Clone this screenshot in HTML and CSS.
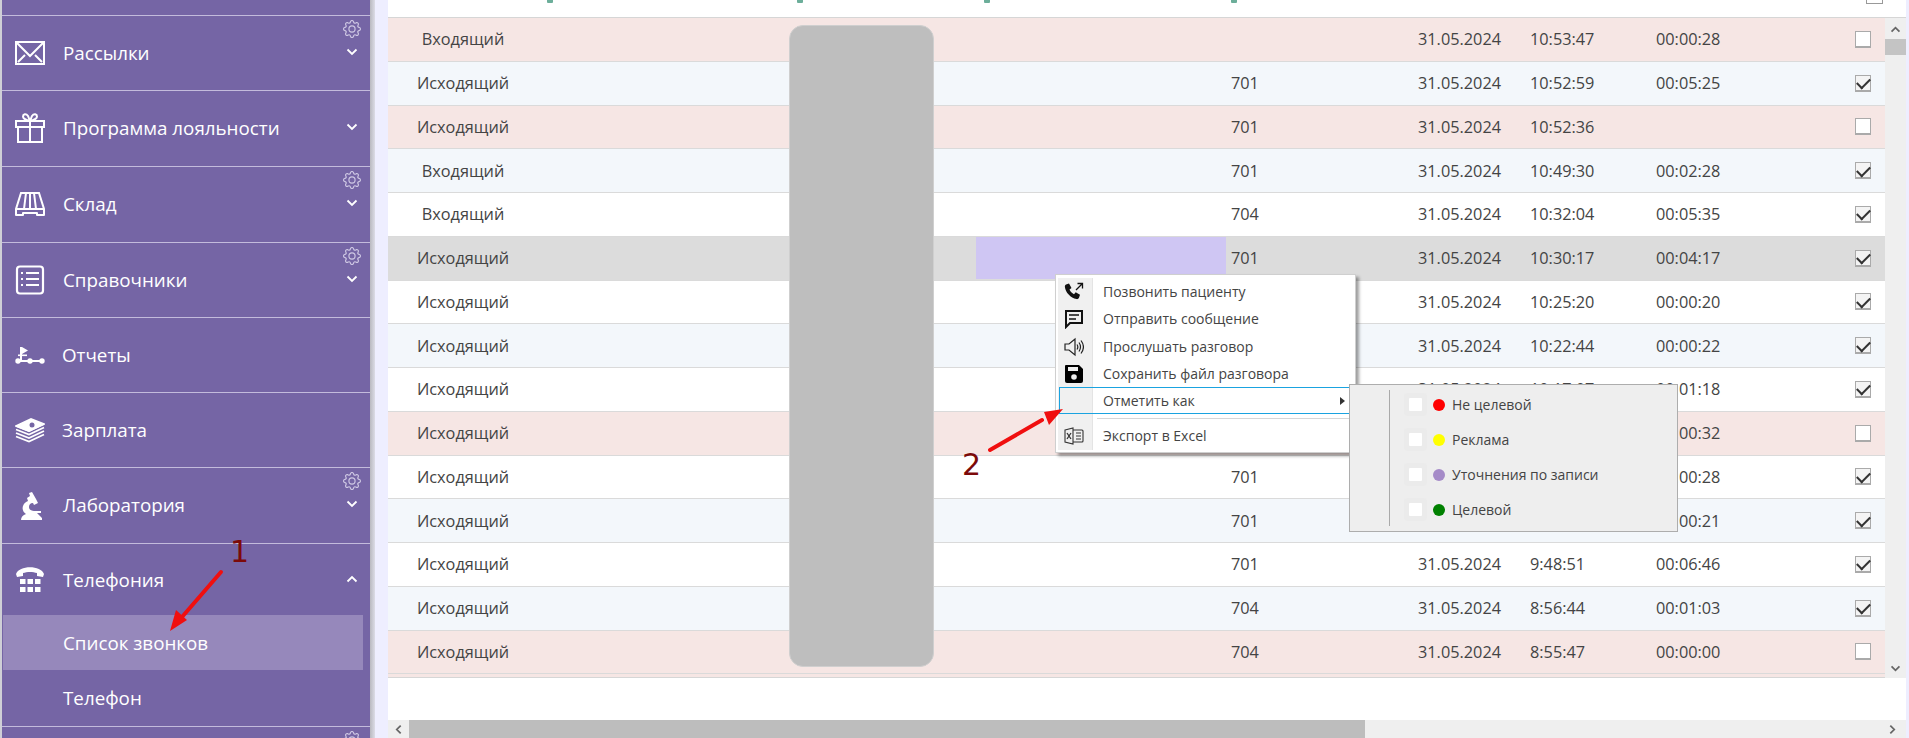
FILE: index.html
```html
<!DOCTYPE html>
<html lang="ru">
<head>
<meta charset="utf-8">
<title>Список звонков</title>
<link rel="stylesheet" href="styles.css">
</head>
<body>
<div class="page">
  <nav class="sidebar">
    <div class="nav-stub"></div>
    <div class="nav-item h75">
      <svg class="nav-icon" viewBox="0 0 30 30"><g fill="none" stroke="#fff" stroke-width="2"><rect x="1" y="4" width="28" height="22"/><path d="M2 5l13 13L28 5M3 24l7-7M27 24l-7-7"/></g></svg>
      <span class="nav-text">Рассылки</span>
      <svg class="gear" viewBox="0 0 16 16"><path d="M8 4.754a3.246 3.246 0 1 0 0 6.492 3.246 3.246 0 0 0 0-6.492zM5.754 8a2.246 2.246 0 1 1 4.492 0 2.246 2.246 0 0 1-4.492 0z"/><path d="M9.796 1.343c-.527-1.79-3.065-1.79-3.592 0l-.094.319a.873.873 0 0 1-1.255.52l-.292-.16c-1.64-.892-3.433.902-2.54 2.541l.159.292a.873.873 0 0 1-.52 1.255l-.319.094c-1.79.527-1.79 3.065 0 3.592l.319.094a.873.873 0 0 1 .52 1.255l-.16.292c-.892 1.64.901 3.434 2.541 2.54l.292-.159a.873.873 0 0 1 1.255.52l.094.319c.527 1.79 3.065 1.79 3.592 0l.094-.319a.873.873 0 0 1 1.255-.52l.292.16c1.64.893 3.434-.902 2.54-2.541l-.159-.292a.873.873 0 0 1 .52-1.255l.319-.094c1.79-.527 1.79-3.065 0-3.592l-.319-.094a.873.873 0 0 1-.52-1.255l.16-.292c.893-1.64-.902-3.433-2.541-2.54l-.292.159a.873.873 0 0 1-1.255-.52l-.094-.319zm-2.633.283c.246-.835 1.428-.835 1.674 0l.094.319a1.873 1.873 0 0 0 2.693 1.115l.291-.16c.764-.415 1.6.42 1.184 1.185l-.159.292a1.873 1.873 0 0 0 1.116 2.692l.318.094c.835.246.835 1.428 0 1.674l-.319.094a1.873 1.873 0 0 0-1.115 2.693l.16.291c.415.764-.42 1.6-1.185 1.184l-.291-.159a1.873 1.873 0 0 0-2.693 1.116l-.094.318c-.246.835-1.428.835-1.674 0l-.094-.319a1.873 1.873 0 0 0-2.692-1.115l-.292.16c-.764.415-1.6-.42-1.184-1.185l.159-.291A1.873 1.873 0 0 0 1.945 8.93l-.319-.094c-.835-.246-.835-1.428 0-1.674l.319-.094A1.873 1.873 0 0 0 3.06 4.377l-.16-.292c-.415-.764.42-1.6 1.185-1.184l.292.159a1.873 1.873 0 0 0 2.692-1.115l.094-.319z"/></svg>
      <svg class="chev" viewBox="0 0 12 8"><path d="M1.500 1.500L6 6l4.500-4.500"/></svg>
    </div>
    <div class="nav-item h76">
      <svg class="nav-icon" viewBox="0 0 30 30"><g fill="none" stroke="#fff" stroke-width="2"><rect x="1" y="8" width="28" height="6"/><rect x="3" y="14" width="24" height="15"/><path d="M15 8v21M15 8C11 7 8 6 8 3.500S11 0 13 3l2 5 2-5c2-3 5-2 5 .5S19 7 15 8"/></g></svg>
      <span class="nav-text">Программа лояльности</span>
      <svg class="chev" viewBox="0 0 12 8"><path d="M1.500 1.500L6 6l4.500-4.500"/></svg>
    </div>
    <div class="nav-item h76">
      <svg class="nav-icon" viewBox="0 0 30 30"><g fill="none" stroke="#fff" stroke-width="2"><path d="M6 4h18l5 16H1zM11 4l-2 16M15 4v16M19 4l2 16"/><path d="M1 20v6h7v-2h14v2h7v-6" stroke-linejoin="round"/></g></svg>
      <span class="nav-text">Склад</span>
      <svg class="gear" viewBox="0 0 16 16"><path d="M8 4.754a3.246 3.246 0 1 0 0 6.492 3.246 3.246 0 0 0 0-6.492zM5.754 8a2.246 2.246 0 1 1 4.492 0 2.246 2.246 0 0 1-4.492 0z"/><path d="M9.796 1.343c-.527-1.79-3.065-1.79-3.592 0l-.094.319a.873.873 0 0 1-1.255.52l-.292-.16c-1.64-.892-3.433.902-2.54 2.541l.159.292a.873.873 0 0 1-.52 1.255l-.319.094c-1.79.527-1.79 3.065 0 3.592l.319.094a.873.873 0 0 1 .52 1.255l-.16.292c-.892 1.64.901 3.434 2.541 2.54l.292-.159a.873.873 0 0 1 1.255.52l.094.319c.527 1.79 3.065 1.79 3.592 0l.094-.319a.873.873 0 0 1 1.255-.52l.292.16c1.64.893 3.434-.902 2.54-2.541l-.159-.292a.873.873 0 0 1 .52-1.255l.319-.094c1.79-.527 1.79-3.065 0-3.592l-.319-.094a.873.873 0 0 1-.52-1.255l.16-.292c.893-1.64-.902-3.433-2.541-2.54l-.292.159a.873.873 0 0 1-1.255-.52l-.094-.319zm-2.633.283c.246-.835 1.428-.835 1.674 0l.094.319a1.873 1.873 0 0 0 2.693 1.115l.291-.16c.764-.415 1.6.42 1.184 1.185l-.159.292a1.873 1.873 0 0 0 1.116 2.692l.318.094c.835.246.835 1.428 0 1.674l-.319.094a1.873 1.873 0 0 0-1.115 2.693l.16.291c.415.764-.42 1.6-1.185 1.184l-.291-.159a1.873 1.873 0 0 0-2.693 1.116l-.094.318c-.246.835-1.428.835-1.674 0l-.094-.319a1.873 1.873 0 0 0-2.692-1.115l-.292.16c-.764.415-1.6-.42-1.184-1.185l.159-.291A1.873 1.873 0 0 0 1.945 8.93l-.319-.094c-.835-.246-.835-1.428 0-1.674l.319-.094A1.873 1.873 0 0 0 3.06 4.377l-.16-.292c-.415-.764.42-1.6 1.185-1.184l.292.159a1.873 1.873 0 0 0 2.692-1.115l.094-.319z"/></svg>
      <svg class="chev" viewBox="0 0 12 8"><path d="M1.500 1.500L6 6l4.500-4.500"/></svg>
    </div>
    <div class="nav-item h75">
      <svg class="nav-icon" viewBox="0 0 30 30"><g fill="none" stroke="#fff" stroke-width="2.200"><rect x="2" y="1.500" width="26" height="27" rx="3"/><path d="M11 8h13M11 14h13M11 20h13M6 8h2M6 14h2M6 20h2"/></g></svg>
      <span class="nav-text">Справочники</span>
      <svg class="gear" viewBox="0 0 16 16"><path d="M8 4.754a3.246 3.246 0 1 0 0 6.492 3.246 3.246 0 0 0 0-6.492zM5.754 8a2.246 2.246 0 1 1 4.492 0 2.246 2.246 0 0 1-4.492 0z"/><path d="M9.796 1.343c-.527-1.79-3.065-1.79-3.592 0l-.094.319a.873.873 0 0 1-1.255.52l-.292-.16c-1.64-.892-3.433.902-2.54 2.541l.159.292a.873.873 0 0 1-.52 1.255l-.319.094c-1.79.527-1.79 3.065 0 3.592l.319.094a.873.873 0 0 1 .52 1.255l-.16.292c-.892 1.64.901 3.434 2.541 2.54l.292-.159a.873.873 0 0 1 1.255.52l.094.319c.527 1.79 3.065 1.79 3.592 0l.094-.319a.873.873 0 0 1 1.255-.52l.292.16c1.64.893 3.434-.902 2.54-2.541l-.159-.292a.873.873 0 0 1 .52-1.255l.319-.094c1.79-.527 1.79-3.065 0-3.592l-.319-.094a.873.873 0 0 1-.52-1.255l.16-.292c.893-1.64-.902-3.433-2.541-2.54l-.292.159a.873.873 0 0 1-1.255-.52l-.094-.319zm-2.633.283c.246-.835 1.428-.835 1.674 0l.094.319a1.873 1.873 0 0 0 2.693 1.115l.291-.16c.764-.415 1.6.42 1.184 1.185l-.159.292a1.873 1.873 0 0 0 1.116 2.692l.318.094c.835.246.835 1.428 0 1.674l-.319.094a1.873 1.873 0 0 0-1.115 2.693l.16.291c.415.764-.42 1.6-1.185 1.184l-.291-.159a1.873 1.873 0 0 0-2.693 1.116l-.094.318c-.246.835-1.428.835-1.674 0l-.094-.319a1.873 1.873 0 0 0-2.692-1.115l-.292.16c-.764.415-1.6-.42-1.184-1.185l.159-.291A1.873 1.873 0 0 0 1.945 8.93l-.319-.094c-.835-.246-.835-1.428 0-1.674l.319-.094A1.873 1.873 0 0 0 3.06 4.377l-.16-.292c-.415-.764.42-1.6 1.185-1.184l.292.159a1.873 1.873 0 0 0 2.692-1.115l.094-.319z"/></svg>
      <svg class="chev" viewBox="0 0 12 8"><path d="M1.500 1.500L6 6l4.500-4.500"/></svg>
    </div>
    <div class="nav-item h75 tight">
      <svg class="nav-icon" viewBox="0 0 30 30"><g fill="#fff"><path d="M5 7v14h2v-7l6-3.500L7 7z"/><circle cx="3" cy="21" r="2.700"/><circle cx="15" cy="21" r="2.700"/><circle cx="27" cy="21" r="2.700"/><rect x="3" y="20" width="24" height="2"/><rect x="3" y="14.500" width="9" height="1.600"/></g></svg>
      <span class="nav-text">Отчеты</span>
    </div>
    <div class="nav-item h75 tight">
      <svg class="nav-icon" viewBox="0 0 30 30"><g fill="none" stroke="#fff" stroke-width="1.800"><path d="M1 11l13 5 15-7M1 14.500l13 5 15-7M1 18l13 5 15-7M1 21.500l13 5 15-7"/><path d="M1 11l15-7 13 5-15 7z" fill="#fff"/></g><circle cx="17" cy="10" r="2.500" fill="#7565a5"/></svg>
      <span class="nav-text">Зарплата</span>
    </div>
    <div class="nav-item h76 lab">
      <svg class="nav-icon" viewBox="0 0 30 30"><path fill="#fff" d="M6 30c0-3 2-5 5-6-3-2-4-5-3-8s3-4 5-5l-1-3 3-2-1-3 3-1 4 7 2 4-4 2-1-2c-3 0-4 2-4 4 0 3 3 4 5 4h7v2h-4l5 5v2z"/></svg>
      <span class="nav-text">Лаборатория</span>
      <svg class="gear" viewBox="0 0 16 16"><path d="M8 4.754a3.246 3.246 0 1 0 0 6.492 3.246 3.246 0 0 0 0-6.492zM5.754 8a2.246 2.246 0 1 1 4.492 0 2.246 2.246 0 0 1-4.492 0z"/><path d="M9.796 1.343c-.527-1.79-3.065-1.79-3.592 0l-.094.319a.873.873 0 0 1-1.255.52l-.292-.16c-1.64-.892-3.433.902-2.54 2.541l.159.292a.873.873 0 0 1-.52 1.255l-.319.094c-1.79.527-1.79 3.065 0 3.592l.319.094a.873.873 0 0 1 .52 1.255l-.16.292c-.892 1.64.901 3.434 2.541 2.54l.292-.159a.873.873 0 0 1 1.255.52l.094.319c.527 1.79 3.065 1.79 3.592 0l.094-.319a.873.873 0 0 1 1.255-.52l.292.16c1.64.893 3.434-.902 2.54-2.541l-.159-.292a.873.873 0 0 1 .52-1.255l.319-.094c1.79-.527 1.79-3.065 0-3.592l-.319-.094a.873.873 0 0 1-.52-1.255l.16-.292c.893-1.64-.902-3.433-2.541-2.54l-.292.159a.873.873 0 0 1-1.255-.52l-.094-.319zm-2.633.283c.246-.835 1.428-.835 1.674 0l.094.319a1.873 1.873 0 0 0 2.693 1.115l.291-.16c.764-.415 1.6.42 1.184 1.185l-.159.292a1.873 1.873 0 0 0 1.116 2.692l.318.094c.835.246.835 1.428 0 1.674l-.319.094a1.873 1.873 0 0 0-1.115 2.693l.16.291c.415.764-.42 1.6-1.185 1.184l-.291-.159a1.873 1.873 0 0 0-2.693 1.116l-.094.318c-.246.835-1.428.835-1.674 0l-.094-.319a1.873 1.873 0 0 0-2.692-1.115l-.292.16c-.764.415-1.6-.42-1.184-1.185l.159-.291A1.873 1.873 0 0 0 1.945 8.93l-.319-.094c-.835-.246-.835-1.428 0-1.674l.319-.094A1.873 1.873 0 0 0 3.06 4.377l-.16-.292c-.415-.764.42-1.6 1.185-1.184l.292.159a1.873 1.873 0 0 0 2.692-1.115l.094-.319z"/></svg>
      <svg class="chev" viewBox="0 0 12 8"><path d="M1.500 1.500L6 6l4.500-4.500"/></svg>
    </div>
    <div class="nav-group">
      <div class="nav-item group-head">
        <svg class="nav-icon" viewBox="0 0 30 30"><g fill="#fff"><path d="M1 9C4 0 26 0 29 9l-1 3-6-1V8c-4-1.500-10-1.500-14 0v3l-6 1z"/><rect x="5" y="14" width="5.500" height="5"/><rect x="12.500" y="14" width="5.500" height="5"/><rect x="20" y="14" width="5.500" height="5"/><rect x="5" y="22" width="5.500" height="5"/><rect x="12.500" y="22" width="5.500" height="5"/><rect x="20" y="22" width="5.500" height="5"/></g></svg>
        <span class="nav-text">Телефония</span>
        <svg class="chev" viewBox="0 0 12 8"><path d="M1.500 6.500L6 2l4.500 4.500"/></svg>
      </div>
      <div class="sub-item active">Список звонков</div>
      <div class="sub-item">Телефон</div>
    </div>
    <div class="nav-item h75">
      <svg class="gear" viewBox="0 0 16 16"><path d="M8 4.754a3.246 3.246 0 1 0 0 6.492 3.246 3.246 0 0 0 0-6.492zM5.754 8a2.246 2.246 0 1 1 4.492 0 2.246 2.246 0 0 1-4.492 0z"/><path d="M9.796 1.343c-.527-1.79-3.065-1.79-3.592 0l-.094.319a.873.873 0 0 1-1.255.52l-.292-.16c-1.64-.892-3.433.902-2.54 2.541l.159.292a.873.873 0 0 1-.52 1.255l-.319.094c-1.79.527-1.79 3.065 0 3.592l.319.094a.873.873 0 0 1 .52 1.255l-.16.292c-.892 1.64.901 3.434 2.541 2.54l.292-.159a.873.873 0 0 1 1.255.52l.094.319c.527 1.79 3.065 1.79 3.592 0l.094-.319a.873.873 0 0 1 1.255-.52l.292.16c1.64.893 3.434-.902 2.54-2.541l-.159-.292a.873.873 0 0 1 .52-1.255l.319-.094c1.79-.527 1.79-3.065 0-3.592l-.319-.094a.873.873 0 0 1-.52-1.255l.16-.292c.893-1.64-.902-3.433-2.541-2.54l-.292.159a.873.873 0 0 1-1.255-.52l-.094-.319zm-2.633.283c.246-.835 1.428-.835 1.674 0l.094.319a1.873 1.873 0 0 0 2.693 1.115l.291-.16c.764-.415 1.6.42 1.184 1.185l-.159.292a1.873 1.873 0 0 0 1.116 2.692l.318.094c.835.246.835 1.428 0 1.674l-.319.094a1.873 1.873 0 0 0-1.115 2.693l.16.291c.415.764-.42 1.6-1.185 1.184l-.291-.159a1.873 1.873 0 0 0-2.693 1.116l-.094.318c-.246.835-1.428.835-1.674 0l-.094-.319a1.873 1.873 0 0 0-2.692-1.115l-.292.16c-.764.415-1.6-.42-1.184-1.185l.159-.291A1.873 1.873 0 0 0 1.945 8.93l-.319-.094c-.835-.246-.835-1.428 0-1.674l.319-.094A1.873 1.873 0 0 0 3.06 4.377l-.16-.292c-.415-.764.42-1.6 1.185-1.184l.292.159a1.873 1.873 0 0 0 2.692-1.115l.094-.319z"/></svg>
    </div>
  </nav>
  <div class="shadow"></div>
  <div class="gutter"></div>
  <main class="content">
    <div class="head">
      <i class="mark m1"></i><i class="mark m2"></i><i class="mark m3"></i><i class="mark m4"></i>
      <span class="head-check"></span>
    </div>
    <div class="table-area">
      <div class="rows">
        <div class="row pink"><span class="c-type">Входящий</span><span></span><span></span><span></span><span></span><span>31.05.2024</span><span>10:53:47</span><span>00:00:28</span><span class="check"></span></div>
        <div class="row blue"><span class="c-type">Исходящий</span><span></span><span></span><span></span><span>701</span><span>31.05.2024</span><span>10:52:59</span><span>00:05:25</span><span class="check on"></span></div>
        <div class="row pink"><span class="c-type">Исходящий</span><span></span><span></span><span></span><span>701</span><span>31.05.2024</span><span>10:52:36</span><span></span><span class="check"></span></div>
        <div class="row blue"><span class="c-type">Входящий</span><span></span><span></span><span></span><span>701</span><span>31.05.2024</span><span>10:49:30</span><span>00:02:28</span><span class="check on"></span></div>
        <div class="row"><span class="c-type">Входящий</span><span></span><span></span><span></span><span>704</span><span>31.05.2024</span><span>10:32:04</span><span>00:05:35</span><span class="check on"></span></div>
        <div class="row grey"><span class="c-type">Исходящий</span><span></span><span class="hl"></span><span></span><span>701</span><span>31.05.2024</span><span>10:30:17</span><span>00:04:17</span><span class="check on"></span></div>
        <div class="row"><span class="c-type">Исходящий</span><span></span><span></span><span></span><span></span><span>31.05.2024</span><span>10:25:20</span><span>00:00:20</span><span class="check on"></span></div>
        <div class="row blue"><span class="c-type">Исходящий</span><span></span><span></span><span></span><span></span><span>31.05.2024</span><span>10:22:44</span><span>00:00:22</span><span class="check on"></span></div>
        <div class="row"><span class="c-type">Исходящий</span><span></span><span></span><span></span><span></span><span>31.05.2024</span><span>10:17:07</span><span>00:01:18</span><span class="check on"></span></div>
        <div class="row pink"><span class="c-type">Исходящий</span><span></span><span></span><span></span><span></span><span></span><span></span><span>00:00:32</span><span class="check"></span></div>
        <div class="row"><span class="c-type">Исходящий</span><span></span><span></span><span></span><span>701</span><span></span><span></span><span>00:00:28</span><span class="check on"></span></div>
        <div class="row blue"><span class="c-type">Исходящий</span><span></span><span></span><span></span><span>701</span><span></span><span></span><span>00:00:21</span><span class="check on"></span></div>
        <div class="row"><span class="c-type">Исходящий</span><span></span><span></span><span></span><span>701</span><span>31.05.2024</span><span>9:48:51</span><span>00:06:46</span><span class="check on"></span></div>
        <div class="row blue"><span class="c-type">Исходящий</span><span></span><span></span><span></span><span>704</span><span>31.05.2024</span><span>8:56:44</span><span>00:01:03</span><span class="check on"></span></div>
        <div class="row pink"><span class="c-type">Исходящий</span><span></span><span></span><span></span><span>704</span><span>31.05.2024</span><span>8:55:47</span><span>00:00:00</span><span class="check"></span></div>
      </div>
      <div class="vscroll">
        <svg class="arrow" viewBox="0 0 12 8"><path d="M1.500 6.500L6 2l4.500 4.500"/></svg>
        <div class="vthumb"></div>
        <svg class="arrow down" viewBox="0 0 12 8"><path d="M1.500 1.500L6 6l4.500-4.500"/></svg>
      </div>
    </div>
    <div class="blank"></div>
    <div class="hscroll">
      <svg class="arrow-h" viewBox="0 0 8 12"><path d="M6.500 1.500L2 6l4.500 4.500"/></svg>
      <div class="hthumb"></div>
      <svg class="arrow-h end" viewBox="0 0 8 12"><path d="M1.500 1.500L6 6l-4.500 4.500"/></svg>
    </div>
  </main>
  <div class="right-edge"></div>

  <div class="redact"></div>

  <div class="menu">
    <div class="menu-rail"></div>
    <div class="menu-item">
      <svg class="menu-icon" viewBox="0 0 20 20"><path fill="#111" d="M2 2.500l3-1 2.500 4.500-2 1.500c.8 2 2.500 3.800 4.500 4.700l1.700-1.900 4.300 2.500-1 3c-.4 1-1.500 1.500-2.500 1.300C6.500 15.800 1.500 10.500.9 5c-.1-1 .2-2 1.100-2.500z"/><path fill="none" stroke="#111" stroke-width="1.300" d="M12 8l6-6M13.500 1.500h5V6.500"/></svg>
      <span>Позвонить пациенту</span>
    </div>
    <div class="menu-item">
      <svg class="menu-icon" viewBox="0 0 20 20"><path fill="none" stroke="#111" stroke-width="2" d="M2 2h16v12H6l-4 4z"/><path stroke="#111" stroke-width="1.600" d="M5 6h10M5 10h7"/></svg>
      <span>Отправить сообщение</span>
    </div>
    <div class="menu-item">
      <svg class="menu-icon" viewBox="0 0 20 20"><g fill="none" stroke="#222" stroke-width="1.200"><path d="M1 7h4l6-5v16l-6-5H1z"/><path d="M13 7.500c1 1.500 1 3.500 0 5M15 5.500c2 3 2 6 0 9M17 3.500c3 4 3 9 0 13"/></g></svg>
      <span>Прослушать разговор</span>
    </div>
    <div class="menu-item">
      <svg class="menu-icon" viewBox="0 0 20 20"><path fill="#000" d="M2 1h13l4 4v12a2 2 0 0 1-2 2H3a2 2 0 0 1-2-2V2a1 1 0 0 1 1-1z"/><rect x="4" y="3" width="10" height="4" fill="#f0f0f0"/><circle cx="10" cy="13" r="2.800" fill="#f0f0f0"/></svg>
      <span>Сохранить файл разговора</span>
    </div>
    <div class="menu-item hover">
      <span>Отметить как</span>
      <i class="caret"></i>
    </div>
    <div class="menu-sep"></div>
    <div class="menu-item">
      <svg class="menu-icon" viewBox="0 0 20 20"><g fill="none" stroke="#333" stroke-width="1.100"><path d="M1 4l8-2v16l-8-2zM9 4h9a1 1 0 0 1 1 1v10a1 1 0 0 1-1 1H9M12 7h5M12 10h5M12 13h5"/><path d="M3 7l4 6M7 7l-4 6" stroke-width="1.300"/></g></svg>
      <span>Экспорт в Excel</span>
    </div>
  </div>

  <div class="submenu">
    <div class="sub-row"><span class="box"></span><i class="dot red"></i><span>Не целевой</span></div>
    <div class="sub-row"><span class="box"></span><i class="dot yellow"></i><span>Реклама</span></div>
    <div class="sub-row"><span class="box"></span><i class="dot violet"></i><span>Уточнения по записи</span></div>
    <div class="sub-row"><span class="box"></span><i class="dot green"></i><span>Целевой</span></div>
  </div>

  <svg class="annot" viewBox="0 0 1909 738">
    <g fill="none" stroke="#f00f0f" stroke-width="4" stroke-linecap="round"><path d="M221 572L182 617"/><path d="M990 450L1042 420"/></g>
    <path fill="#f00f0f" d="M170 631l6-21 11 10zM1063 409l-19 3 5 13z"/>
    <text class="num" x="230" y="562">1</text>
    <text class="num" x="962" y="475">2</text>
  </svg>
</div>
</body>
</html>
```

FILE: styles.css
```css
* { box-sizing: border-box; }
html, body { margin: 0; padding: 0; height: 738px; overflow: hidden; }
body { font-family: "Open Sans", "Noto Sans", sans-serif; background: #eeeeff; }

.page { position: relative; display: flex; width: 1909px; height: 738px; overflow: hidden; background: #eeeeff; }

/* Sidebar */
.sidebar { flex: none; width: 370px; height: 738px; overflow: hidden; background: #7565a5; border-left: 2px solid #cfcfd6; color: #fff; }
.nav-stub { height: 16px; border-bottom: 1px solid #c3bbdc; }
.nav-item { position: relative; display: flex; align-items: center; padding: 0 12px 1px 13px; border-bottom: 1px solid #c3bbdc; font-size: 18.800px; }
.h75 { height: 75px; }
.h76 { height: 76px; }
.lab { padding-bottom: 2px; }
.nav-icon { flex: none; width: 30px; height: 30px; margin-right: 18px; }
.tight .nav-icon { margin-right: 17px; }
.nav-text { flex: 1; }
.chev { flex: none; width: 12px; height: 8px; fill: none; stroke: #fff; stroke-width: 1.800; margin: 0 0 2px; }
.gear { position: absolute; top: 4px; right: 9px; width: 18px; height: 18px; fill: #cfc8e4; }
.nav-group { height: 183px; border-bottom: 1px solid #c3bbdc; }
.group-head { height: 71px; padding-top: 1px; padding-bottom: 0; border-bottom: 0; }
.sub-item { display: flex; align-items: center; height: 55px; margin: 0 7px 0 1px; padding-left: 60px; font-size: 18.800px; }
.sub-item.active { background: #9688bb; }

.shadow { flex: none; width: 5px; background: linear-gradient(90deg, #b9b9c0, #dcdce6); }
.gutter { flex: none; width: 13px; }

/* Content */
.content { flex: none; display: flex; flex-direction: column; width: 1518px; height: 738px; background: #fff; color: #444; }
.right-edge { flex: 1; }
.head { flex: none; display: flex; height: 18px; border-bottom: 1px solid #d6d6d6; }
.mark { flex: none; width: 6px; height: 3px; background: #6cae9a; border-radius: 0 0 1px 1px; }
.m1 { margin-left: 159px; }
.m2 { margin-left: 244px; }
.m3 { margin-left: 181px; }
.m4 { margin-left: 241px; }
.head-check { width: 17px; height: 4px; margin-left: 629px; border: 1px solid #999; border-top: 0; background: #fff; }

.table-area { flex: none; display: flex; height: 660px; }
.rows { flex: 1; background: #f6e6e4; border-bottom: 1px solid #d6d6d6; overflow: hidden; }
.row { display: grid; grid-template-columns: 150px 438px 250px 5px 187px 112px 126px 184px 46px; align-items: center; height: 43.760px; background: #fff; border-bottom: 1px solid #dadada; font-size: 16.300px; }
.row.pink { background: #f6e6e4; }
.row.blue { background: #f3f7fb; }
.row.grey { background: #dcdcdc; }
.c-type { text-align: center; }
.hl { align-self: stretch; margin-bottom: 1px; background: #cfc6f3; }
.check { position: relative; justify-self: center; width: 16px; height: 17px; margin-right: 1px; background: #fff; border: 1px solid #aaa; border-bottom-width: 2px; }
.check.on { background: #f4f4f4; }
.check.on::after { content: ""; position: absolute; left: 1.500px; top: 2.500px; width: 11px; height: 6px; border-left: 2.300px solid #333; border-bottom: 2.300px solid #333; transform: rotate(-45deg); }

.vscroll { position: relative; flex: none; width: 21px; background: #efefef; }
.arrow { position: absolute; top: 8px; left: 5px; width: 11px; height: 7px; fill: none; stroke: #666; stroke-width: 2; }
.arrow.down { top: auto; bottom: 6px; }
.vthumb { position: absolute; top: 21px; left: 0; width: 21px; height: 16px; background: #c4c4c4; }
.blank { flex: 1; background: #fff; }
.hscroll { flex: none; display: flex; align-items: stretch; height: 18px; background: #efefef; }
.arrow-h { flex: none; align-self: center; width: 7px; height: 11px; margin: 0 7px; fill: none; stroke: #666; stroke-width: 2; }
.arrow-h.end { margin: 0 0 0 524px; }
.hthumb { flex: none; width: 956px; background: #bdbdbd; }

.redact { position: absolute; left: 789px; top: 25px; width: 145px; height: 642px; background: #bebebe; border: 1px solid #cfcfcf; border-radius: 14px; }

/* Context menu */
.menu { position: absolute; left: 1055px; top: 274px; width: 301px; height: 179px; padding: 3px 5px 0 3px; background: #fff; border: 1px solid #cfcfcf; box-shadow: 3px 3px 3px rgba(0, 0, 0, .38); font-size: 14px; color: #444; }
.menu-rail { position: absolute; left: 2px; top: 3px; bottom: 2px; width: 35px; background: #f0f0f0; border-right: 1px solid #e4e4e4; }
.menu-item { position: relative; display: flex; align-items: center; height: 27.300px; padding-left: 44px; }
.menu-icon { position: absolute; left: 5px; top: 4px; width: 20px; height: 20px; }
.menu-item.hover { height: 27px; margin-right: -5px; padding-left: 43px; border: 1px solid #1aa3e0; }
.caret { margin-left: auto; margin-right: 9px; width: 0; height: 0; border-left: 5px solid #333; border-top: 4px solid transparent; border-bottom: 4px solid transparent; }
.menu-sep { height: 1px; margin: 4px -4px 3px 38px; background: #d6d6d6; }

.submenu { position: absolute; left: 1349px; top: 384px; width: 329px; height: 148px; padding: 2px 0 0 53px; background: #eeeeee; border: 1px solid #adadad; font-size: 14px; color: #444; }
.submenu::before { content: ""; position: absolute; left: 39px; top: 5px; bottom: 5px; width: 1px; background: #a9a9a9; }
.sub-row { display: flex; align-items: center; gap: 7px; height: 35px; }
.box { flex: none; width: 13px; height: 13px; margin: 0 4px 0 6px; background: #fff; border-radius: 1px; box-shadow: 0 0 0 5px #ebebeb; }
.dot { flex: none; width: 12px; height: 12px; border-radius: 50%; }
.dot.red { background: #ff0000; }
.dot.yellow { background: #ffff00; }
.dot.violet { background: #a58bc8; }
.dot.green { background: #008000; }

/* Annotations drawn on top of the screenshot */
.annot { position: absolute; left: 0; top: 0; width: 1909px; height: 738px; pointer-events: none; }
.num { font-family: "DejaVu Sans", sans-serif; font-size: 30px; fill: #7c0a0a; }
```
